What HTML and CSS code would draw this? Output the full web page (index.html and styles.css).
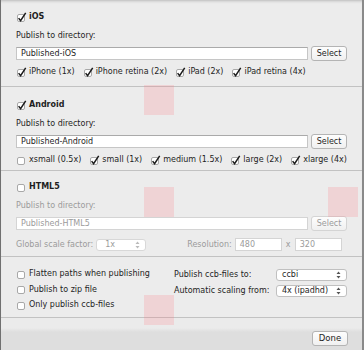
FILE: index.html
```html
<!DOCTYPE html>
<html>
    <head>
        <meta http-equiv="Content-Type" content="text/html; charset=utf-8">
        <title>Publish Settings</title>
        <link rel="stylesheet" href="styles.css">
    </head>
    <body>
        <svg class="defs" width="0" height="0">
            <symbol id="on" viewBox="0 0 11 11">
                <rect x="1.5" y="2.5" width="7" height="7" rx="1.5" fill="#fff" stroke="#a8a8a8"/>
                <path d="M2.6 6.1 L4.6 8.7 L9.7 0.9" fill="none" stroke="#1c1c1c" stroke-width="1.5"/>
            </symbol>
            <symbol id="off" viewBox="0 0 11 11">
                <rect x="1.5" y="2.5" width="7" height="7" rx="1.5" fill="#fff" stroke="#a8a8a8"/>
            </symbol>
            <symbol id="updown" viewBox="0 0 5 8">
                <path d="M2.5 0.5 L4.5 3 L0.5 3 Z M2.5 7.5 L4.5 5 L0.5 5 Z" fill="#555"/>
            </symbol>
        </svg>

        <div class="window">
            <section class="platform ios">
                <label class="check title"><svg><use href="#on"/></svg>iOS</label>
                <p class="field-label">Publish to directory:</p>
                <div class="dir-row">
                    <span class="input">Published-iOS</span>
                    <span class="button">Select</span>
                </div>
                <div class="options">
                    <label class="check"><svg><use href="#on"/></svg>iPhone (1x)</label>
                    <label class="check"><svg><use href="#on"/></svg>iPhone retina (2x)</label>
                    <label class="check"><svg><use href="#on"/></svg>iPad (2x)</label>
                    <label class="check"><svg><use href="#on"/></svg>iPad retina (4x)</label>
                </div>
            </section>

            <section class="platform android">
                <label class="check title"><svg><use href="#on"/></svg>Android</label>
                <p class="field-label">Publish to directory:</p>
                <div class="dir-row">
                    <span class="input">Published-Android</span>
                    <span class="button">Select</span>
                </div>
                <div class="options">
                    <label class="check"><svg><use href="#off"/></svg>xsmall (0.5x)</label>
                    <label class="check"><svg><use href="#on"/></svg>small (1x)</label>
                    <label class="check"><svg><use href="#on"/></svg>medium (1.5x)</label>
                    <label class="check"><svg><use href="#on"/></svg>large (2x)</label>
                    <label class="check"><svg><use href="#on"/></svg>xlarge (4x)</label>
                </div>
            </section>

            <section class="platform html5 disabled">
                <label class="check title"><svg><use href="#off"/></svg>HTML5</label>
                <p class="field-label">Publish to directory:</p>
                <div class="dir-row">
                    <span class="input">Published-HTML5</span>
                    <span class="button">Select</span>
                </div>
                <div class="scale-row">
                    <span class="scale-label">Global scale factor:</span>
                    <span class="popup scale">1x<svg><use href="#updown"/></svg></span>
                    <span class="res-label">Resolution:</span>
                    <span class="input small">480</span>
                    <span class="times">x</span>
                    <span class="input small">320</span>
                </div>
            </section>

            <section class="misc">
                <div class="misc-checks">
                    <label class="check"><svg><use href="#off"/></svg>Flatten paths when publishing</label>
                    <label class="check"><svg><use href="#off"/></svg>Publish to zip file</label>
                    <label class="check"><svg><use href="#off"/></svg>Only publish ccb-files</label>
                </div>
                <div class="misc-popups">
                    <span>Publish ccb-files to:</span>
                    <span class="popup">ccbi<svg><use href="#updown"/></svg></span>
                    <span>Automatic scaling from:</span>
                    <span class="popup">4x (ipadhd)<svg><use href="#updown"/></svg></span>
                </div>
            </section>

            <footer class="actions">
                <span class="button done">Done</span>
            </footer>

            <div class="marker" style="left: 143px; top: 85px;"></div>
            <div class="marker" style="left: 143px; top: 187px;"></div>
            <div class="marker" style="left: 327px; top: 187px;"></div>
            <div class="marker" style="left: 143px; top: 295px;"></div>
        </div>
    </body>
</html>
```

FILE: styles.css
```css
* {
    box-sizing: border-box;
}

body {
    margin: 0;
    font-family: "DejaVu Sans", sans-serif;
    font-size: 8px;
    line-height: 12px;
    color: #1e1e1e;
}

.defs {
    position: absolute;
}

.window {
    position: relative;
    width: 364px;
    height: 350px;
    display: flex;
    flex-direction: column;
    background: #ececec;
    border-left: 1px solid #707070;
    border-right: 2px solid #8a8a8a;
    box-shadow: inset 0 3px 3px -2px #b8b8b8;
}

.platform {
    padding: 11px 15px 0;
    border-bottom: 1px solid #c2c2c2;
}

.ios {
    height: 87px;
}

.android {
    height: 84px;
    padding-top: 12px;
}

.html5 {
    height: 86px;
    padding-top: 10px;
}

.check {
    display: flex;
    align-items: center;
    white-space: nowrap;
}

.check svg {
    width: 11px;
    height: 11px;
    margin-right: 2px;
    flex: none;
}

.title {
    font-weight: bold;
}

.field-label {
    margin: 7px 0 0;
}

.dir-row {
    display: flex;
    gap: 3px;
    margin-top: 4px;
    align-items: center;
}

.input {
    flex: 1;
    height: 13px;
    padding: 0 4px;
    background: #fff;
    border: 1px solid #c6c6c6;
    border-top-color: #aaa;
    line-height: 11px;
}

.button {
    width: 36px;
    height: 15px;
    border: 1px solid #b4b4b4;
    border-radius: 3px;
    background: linear-gradient(#fdfdfd, #f0f0f0);
    text-align: center;
    line-height: 13px;
}

.options {
    display: flex;
    gap: 8px;
    margin-top: 5px;
}

.disabled .field-label,
.disabled .input,
.disabled .button,
.disabled .scale-row {
    color: #9b9b9b;
}

.disabled .input,
.disabled .button {
    border-color: #d4d4d4;
}

.scale-row {
    display: flex;
    align-items: center;
    margin-top: 7px;
}

.popup {
    display: flex;
    align-items: center;
    justify-content: space-between;
    height: 12px;
    padding: 0 5px 0 5px;
    background: #fff;
    border: 1px solid #c0c0c0;
    border-radius: 3px;
    line-height: 10px;
}

.popup svg {
    width: 5px;
    height: 8px;
}

.scale {
    width: 50px;
    margin-left: 3px;
    padding-left: 8px;
}

.disabled .popup {
    border-color: #d8d8d8;
}

.disabled .popup svg {
    opacity: 0.4;
}

.res-label {
    margin-left: 41px;
    margin-right: 3px;
}

.input.small {
    flex: none;
    width: 47px;
}

.times {
    width: 13px;
    text-align: center;
}

.misc {
    height: 61px;
    display: flex;
    padding: 11px 15px 0;
    border-bottom: 1px solid #c2c2c2;
}

.misc-checks {
    width: 159px;
    display: flex;
    flex-direction: column;
    gap: 3.5px;
}

.misc-popups {
    display: grid;
    grid-template-columns: 102px 71px;
    row-gap: 4px;
    align-items: center;
    align-content: start;
    padding-top: 1px;
}

.actions {
    flex: 1;
    display: flex;
    justify-content: flex-end;
    align-items: flex-start;
    padding: 13px 14px 0;
    background: linear-gradient(#ebebeb 0, #ebebeb 10px, #dedede 14px);
}

.done {
    height: 15px;
    line-height: 13px;
    font-size: 8.5px;
}

.marker {
    position: absolute;
    width: 30px;
    height: 30px;
    background: rgba(255, 116, 126, 0.2);
}
```
